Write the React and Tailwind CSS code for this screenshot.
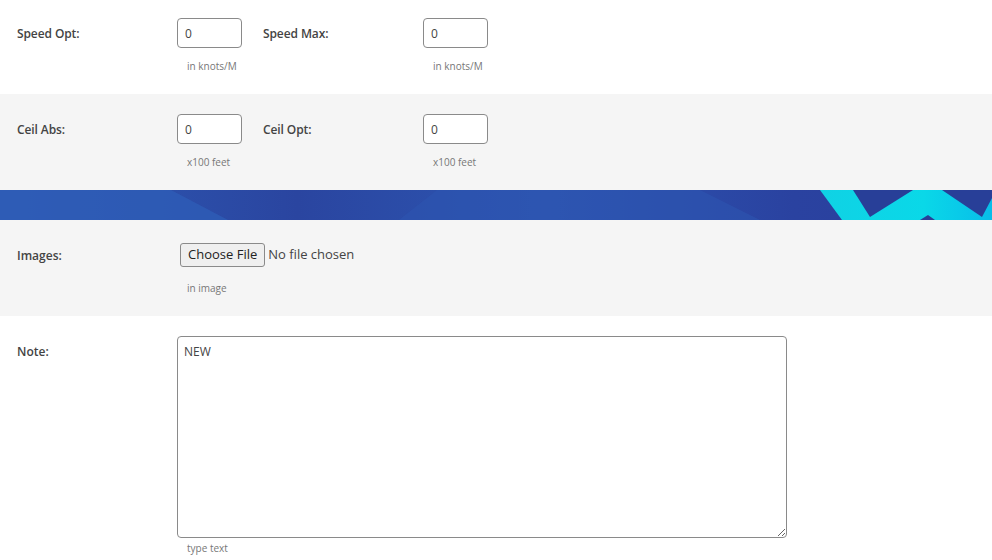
import React from 'react';

const font = { fontFamily: '"Open Sans", "Noto Sans", "Liberation Sans", sans-serif' };

const Field = ({ label, value, help }) => (
  <div className="flex">
    <label className="w-[160px] h-[30px] pt-[1px] flex items-center text-[12px] font-semibold text-[#444] tracking-[-0.1px]">
      {label}
    </label>
    <div className="flex flex-col">
      <input
        type="text"
        defaultValue={value}
        className="w-[65px] h-[30px] px-[7px] text-[12px] text-[#444] bg-white border border-[#8a8a8a] rounded-[4px] outline-none"
        style={font}
      />
      <span className="mt-[12px] pl-[10px] text-[10px] leading-[12px] text-[#777]">{help}</span>
    </div>
  </div>
);

const Banner = () => (
  <div className="h-[30px] w-full overflow-hidden bg-[#2b4aa3]">
    <svg width="992" height="30" viewBox="0 0 992 30" className="block">
      <defs>
        <linearGradient id="bg" x1="0" x2="1" y1="0" y2="0">
          <stop offset="0" stopColor="#2e5bb5" />
          <stop offset="0.3" stopColor="#2a45a0" />
          <stop offset="0.55" stopColor="#2d56b2" />
          <stop offset="0.8" stopColor="#2a42a0" />
          <stop offset="1" stopColor="#2a3e9c" />
        </linearGradient>
        <linearGradient id="cy" x1="0" x2="1" y1="0" y2="0">
          <stop offset="0" stopColor="#10d2e4" />
          <stop offset="0.6" stopColor="#0ad8e8" />
          <stop offset="1" stopColor="#08bde9" />
        </linearGradient>
      </defs>
      <rect width="992" height="30" fill="url(#bg)" />
      <polygon points="0,0 171,0 228,30 0,30" fill="#2e5db6" opacity="0.8" />
      <polygon points="437,0 700,0 760,30 399,30" fill="#2d55b1" opacity="0.6" />
      <polygon points="820,0 992,0 992,30 842,30" fill="url(#cy)" />
      <polygon points="853,0 913,0 870,27" fill="#283f98" />
      <polygon points="942,0 992,0 992,8 982,27" fill="#283f98" />
      <polygon points="920,30 935,30 928,25" fill="#283f98" />
    </svg>
  </div>
);

export default function App() {
  return (
    <div className="w-[992px] bg-white" style={font}>
      <div className="h-[94px] pt-[18px] pl-[17px] flex gap-[21px]">
        <Field label="Speed Opt:" value="0" help="in knots/M" />
        <Field label="Speed Max:" value="0" help="in knots/M" />
      </div>

      <div className="h-[96px] pt-[20px] pl-[17px] flex gap-[21px] bg-[#f5f5f5]">
        <Field label="Ceil Abs:" value="0" help="x100 feet" />
        <Field label="Ceil Opt:" value="0" help="x100 feet" />
      </div>

      <Banner />

      <div className="h-[96px] pt-[20px] pl-[17px] flex bg-[#f5f5f5]">
        <label className="w-[160px] h-[30px] pt-[1px] flex items-center text-[12px] font-semibold text-[#444]">
          Images:
        </label>
        <div className="flex flex-col">
          <div className="flex items-center h-[30px] pl-[3px]">
            <button className="h-[24px] px-[7px] text-[13px] text-[#222] bg-[#efefef] border border-[#8a8a8a] rounded-[3px]">
              Choose File
            </button>
            <span className="ml-[3px] text-[13px] text-[#444]">No file chosen</span>
          </div>
          <span className="mt-[12px] pl-[10px] text-[10px] leading-[12px] text-[#777]">in image</span>
        </div>
      </div>

      <div className="h-[244px] pt-[20px] pl-[17px] flex">
        <label className="w-[160px] h-[30px] pt-[1px] flex items-center text-[12px] font-semibold text-[#444]">
          Note:
        </label>
        <div className="flex flex-col">
          <textarea
            defaultValue="NEW"
            className="w-[610px] h-[202px] px-[6px] py-[6px] text-[12px] text-[#444] bg-white border border-[#8a8a8a] rounded-[4px] outline-none"
            style={font}
          />
          <span className="mt-[4px] pl-[10px] text-[10px] leading-[12px] text-[#777]">type text</span>
        </div>
      </div>
    </div>
  );
}
